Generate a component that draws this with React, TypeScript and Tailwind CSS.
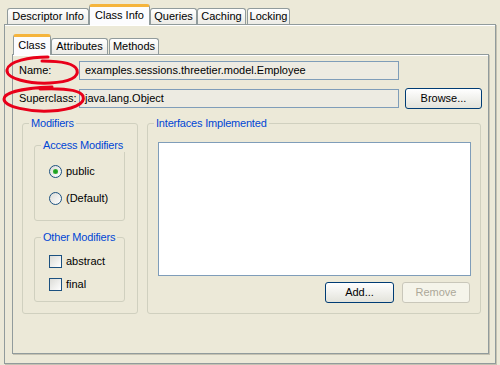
import React from "react";

const OuterTab = ({ label, w, selected, ml = 0 }: { label: string; w: number; selected?: boolean; ml?: number }) => (
  <div
    style={{ width: w, marginLeft: ml }}
    className={
      selected
        ? "relative z-10 -mb-[1px] flex h-[21px] items-start justify-center rounded-t-[3px] border-x border-t-[3px] border-x-[#919B9C] border-t-[#F5B43C] bg-[#FCFCFE] pt-[2px]"
        : "flex h-[16px] items-center justify-center rounded-t-[3px] border-x border-t border-[#919B9C] bg-gradient-to-b from-white to-[#ECEBE6]"
    }
  >
    <span className="whitespace-nowrap leading-[13px]">{label}</span>
  </div>
);

const Radio = ({ checked }: { checked?: boolean }) => (
  <div className="flex h-[13px] w-[13px] items-center justify-center rounded-full border border-[#1C5180] bg-gradient-to-br from-[#DCDCD7] to-white">
    {checked && <div className="h-[5px] w-[5px] rounded-full bg-[#21A121] shadow-[inset_0_0_1px_#7BE07B]" />}
  </div>
);

const Check = () => (
  <div className="h-[13px] w-[13px] border border-[#1C5180] bg-gradient-to-br from-[#DCDCD7] to-white" />
);

const Btn = ({ label, w, disabled }: { label: string; w: number; disabled?: boolean }) => (
  <div
    style={{ width: w }}
    className={
      disabled
        ? "flex h-[21px] items-center justify-center rounded-[3px] border border-[#C9C7BA] bg-[#F5F4EA] text-[#ACA899]"
        : "flex h-[21px] items-center justify-center rounded-[3px] border border-[#003C74] bg-gradient-to-b from-white to-[#E3E3DB]"
    }
  >
    {label}
  </div>
);

const Legend = ({ children }: { children: React.ReactNode }) => (
  <legend className="ml-[6px] whitespace-nowrap px-[2px] leading-[13px] tracking-[-0.2px] text-[#0046D5]">{children}</legend>
);

export default function App() {
  return (
    <div className="relative h-[365px] w-[500px] overflow-hidden bg-[#ECE9D8] pt-[4px] font-['Liberation_Sans',Arial,sans-serif] text-[11px] text-black">
      {/* outer tabs */}
      <div className="relative z-10 flex h-[20px] items-end pl-[7px]">
        <OuterTab label="Descriptor Info" w={82} />
        <OuterTab label="Class Info" w={61} selected />
        <OuterTab label="Queries" w={47} />
        <OuterTab label="Caching" w={49} />
        <OuterTab label="Locking" w={43} ml={1} />
      </div>

      {/* outer panel */}
      <div className="ml-[4px] h-[340px] w-[492px] border border-[#919B9C] bg-[#ECE9D8] pl-[7px] pt-[8px] shadow-[inset_0_1px_0_#ffffff,1px_1px_0_#C5C2B2]">
        {/* inner tabs */}
        <div className="relative z-10 flex h-[21px] items-end pl-[1px]">
          <OuterTab label="Class" w={38} selected />
          <OuterTab label="Attributes" w={57} />
          <OuterTab label="Methods" w={50} ml={1} />
        </div>

        {/* inner panel */}
        <div className="h-[300px] w-[477px] border border-[#919B9C] bg-[#ECE9D8] pl-[6px] pt-[6px] shadow-[inset_0_1px_0_#ffffff,1px_1px_0_#C5C2B2]">
          <div className="flex h-[19px] items-center">
            <span className="w-[60px]">Name:</span>
            <div className="flex h-[19px] w-[320px] items-center border border-[#7F9DB9] bg-[#EDEBE2] pl-[5px]">
              examples.sessions.threetier.model.Employee
            </div>
          </div>
          <div className="mt-[8px] flex h-[21px] items-center">
            <span className="w-[60px]">Superclass:</span>
            <div className="flex h-[19px] w-[320px] items-center border border-[#7F9DB9] bg-[#EDEBE2] pl-[5px]">
              java.lang.Object
            </div>
            <div className="ml-[6px]">
              <Btn label="Browse..." w={77} />
            </div>
          </div>

          <div className="ml-[3px] mt-[8px] flex h-[197px] gap-[9px]">
            <fieldset className="h-full w-[116px] min-w-0 shrink-0 rounded-[3px] border border-[#D0D0BF]">
              <Legend>Modifiers</Legend>
              <fieldset className="ml-[11px] mt-[9px] h-[82px] w-[91px] min-w-0 rounded-[3px] border border-[#D0D0BF]">
                <Legend>Access Modifiers</Legend>
                <div className="flex flex-col gap-[14px] pl-[14px] pt-[13px]">
                  <div className="flex h-[13px] items-center gap-[4px]">
                    <Radio checked />
                    <span>public</span>
                  </div>
                  <div className="flex h-[13px] items-center gap-[4px]">
                    <Radio />
                    <span>(Default)</span>
                  </div>
                </div>
              </fieldset>
              <fieldset className="ml-[11px] mt-[10px] h-[71px] w-[91px] min-w-0 rounded-[3px] border border-[#D0D0BF]">
                <Legend>Other Modifiers</Legend>
                <div className="flex flex-col gap-[10px] pl-[14px] pt-[11px]">
                  <div className="flex h-[13px] items-center gap-[4px]">
                    <Check />
                    <span>abstract</span>
                  </div>
                  <div className="flex h-[13px] items-center gap-[4px]">
                    <Check />
                    <span>final</span>
                  </div>
                </div>
              </fieldset>
            </fieldset>

            <fieldset className="h-full w-[334px] min-w-0 shrink-0 rounded-[3px] border border-[#D0D0BF]">
              <Legend>Interfaces Implemented</Legend>
              <div className="ml-[10px] mt-[12px] h-[134px] w-[313px] border border-[#7F9DB9] bg-white" />
              <div className="mr-[10px] mt-[6px] flex justify-end gap-[8px]">
                <Btn label="Add..." w={69} />
                <Btn label="Remove" w={68} disabled />
              </div>
            </fieldset>
          </div>
        </div>
      </div>

      {/* red annotation ellipses */}
      <svg className="pointer-events-none absolute left-0 top-0 z-20" width="500" height="365" viewBox="0 0 500 365">
        <path
          d="M 48 57 C 30 57, 8 61, 7 70 C 6 79, 30 84, 50 83 C 70 82, 79 77, 77 70 C 75 64, 62 61, 42 61"
          fill="none"
          stroke="#E8001A"
          strokeWidth="3"
          strokeLinecap="round"
        />
        <path
          d="M 52 87 C 25 88, 4 92, 4 99 C 4 107, 30 112, 50 111 C 72 110, 86 104, 83 96 C 80 90, 65 88, 40 89"
          fill="none"
          stroke="#E8001A"
          strokeWidth="3"
          strokeLinecap="round"
        />
      </svg>
    </div>
  );
}
